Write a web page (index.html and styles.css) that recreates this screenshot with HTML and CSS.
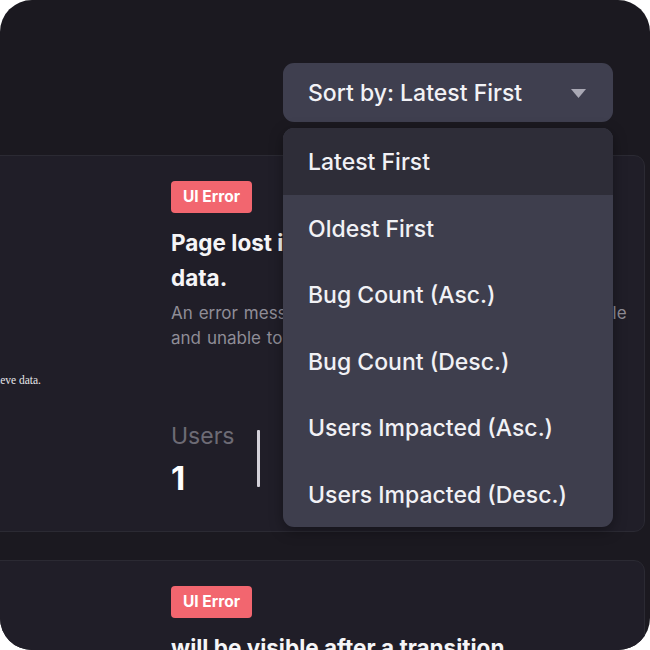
FILE: index.html
```html
<!DOCTYPE html>
<html>
<head>
<meta charset="utf-8">
<link rel="stylesheet" href="styles.css">
</head>
<body>
<div class="frame">
  <div class="toolbar">
    <div class="sort">
      <button class="sort-btn">
        <span>Sort by: Latest First</span>
        <svg class="caret" width="15" height="9" viewBox="0 0 15 9"><path d="M0 0 H15 L7.5 9 Z" fill="#a9a8b4"/></svg>
      </button>
      <ul class="menu">
        <li class="active">Latest First</li>
        <li>Oldest First</li>
        <li>Bug Count (Asc.)</li>
        <li>Bug Count (Desc.)</li>
        <li>Users Impacted (Asc.)</li>
        <li>Users Impacted (Desc.)</li>
      </ul>
    </div>
  </div>
  <div class="list">
    <div class="card">
      <div class="shot"><span class="alt">Page unable to retrieve data.</span></div>
      <div class="body">
        <span class="badge">UI Error</span>
        <h2 class="title">Page lost its connection to the<br>data.</h2>
        <p class="desc">An error message displayed saying site was unavailable<br>and unable to respond.</p>
        <div class="stats">
          <div class="stat"><div class="label">Users</div><div class="value">1</div></div>
          <div class="divider"></div>
          <div class="stat"><div class="label">Bugs</div><div class="value">3</div></div>
        </div>
      </div>
    </div>
    <div class="card">
      <div class="shot"></div>
      <div class="body">
        <span class="badge">UI Error</span>
        <h2 class="title">will be visible after a transition</h2>
      </div>
    </div>
  </div>
</div>
</body>
</html>
```

FILE: styles.css
```css
* { box-sizing: border-box; }
html, body { margin: 0; padding: 0; background: #ffffff; }
body { font-family: Inter, "Noto Sans", sans-serif; }

.frame {
  width: 650px;
  height: 650px;
  border-radius: 32px;
  overflow: hidden;
  background: #1b1920;
  display: flex;
  flex-direction: column;
}

.toolbar {
  display: flex;
  justify-content: flex-end;
  padding: 63px 37px 0 0;
  position: relative;
  z-index: 2;
}

.sort { position: relative; width: 330px; }

.sort-btn {
  width: 330px;
  height: 59px;
  border: 0;
  border-radius: 11px;
  background: #3f3f4f;
  color: #f2f2f6;
  font-family: Inter, sans-serif;
  font-size: 23px;
  font-weight: 500;
  display: flex;
  align-items: center;
  justify-content: space-between;
  padding: 0 27px 0 25px;
}

.caret { display: block; margin-top: 1px; }

.menu {
  position: absolute;
  top: 65px;
  left: 0;
  width: 330px;
  margin: 0;
  padding: 0;
  list-style: none;
  background: #3e3e4d;
  border-radius: 11px;
  overflow: hidden;
  box-shadow: 0 4px 14px rgba(0,0,0,0.35);
}

.menu li {
  height: 66.5px;
  display: flex;
  align-items: center;
  padding: 2px 0 0 25px;
  font-size: 23px;
  font-weight: 500;
  color: #f1f1f5;
}

.menu li.active { background: #2e2d38; }

.list {
  display: flex;
  flex-direction: column;
  gap: 28px;
  padding: 33px 5px 0 0;
}

.card {
  margin-left: -150px;
  background: #201e28;
  border: 1px solid #2b2a33;
  border-radius: 11px;
  display: flex;
  gap: 24px;
  padding: 25px 10px 24px 23px;
  flex-shrink: 0;
}

.card:first-child { height: 377px; }
.card:last-child { height: 200px; }

.shot {
  width: 273px;
  flex-shrink: 0;
  display: flex;
  align-items: flex-start;
  padding-top: 193px;
}

.alt {
  display: block;
  width: 167px;
  text-align: right;
  white-space: nowrap;
  font-family: "Liberation Serif", serif;
  font-size: 11.5px;
  color: #e6e6ea;
}

.body { flex: 1; min-width: 0; overflow: hidden; }

.badge {
  display: inline-block;
  height: 32px;
  line-height: 32px;
  padding: 0 12px;
  border-radius: 4px;
  background: #f2666f;
  color: #ffffff;
  font-size: 15.5px;
  font-weight: 700;
}

.title {
  margin: 12px 0 0;
  font-size: 22.5px;
  font-weight: 700;
  line-height: 35px;
  color: #f5f5f7;
  white-space: nowrap;
}

.desc {
  margin: 6px 0 0;
  font-size: 17px;
  line-height: 25px;
  color: #8f8d97;
  white-space: nowrap;
  word-spacing: 1.1px;
}

.stats {
  display: flex;
  align-items: center;
  margin-top: 71px;
}

.stat .label {
  font-size: 23px;
  color: #6d6b75;
  line-height: 28px;
}

.stat .value {
  font-size: 33px;
  font-weight: 700;
  color: #ffffff;
  line-height: 40px;
  margin-top: 8px;
}

.divider {
  width: 3px;
  height: 57px;
  background: #d4d2da;
  border-radius: 1px;
  margin: -4px 30px 0 23px;
}
```
